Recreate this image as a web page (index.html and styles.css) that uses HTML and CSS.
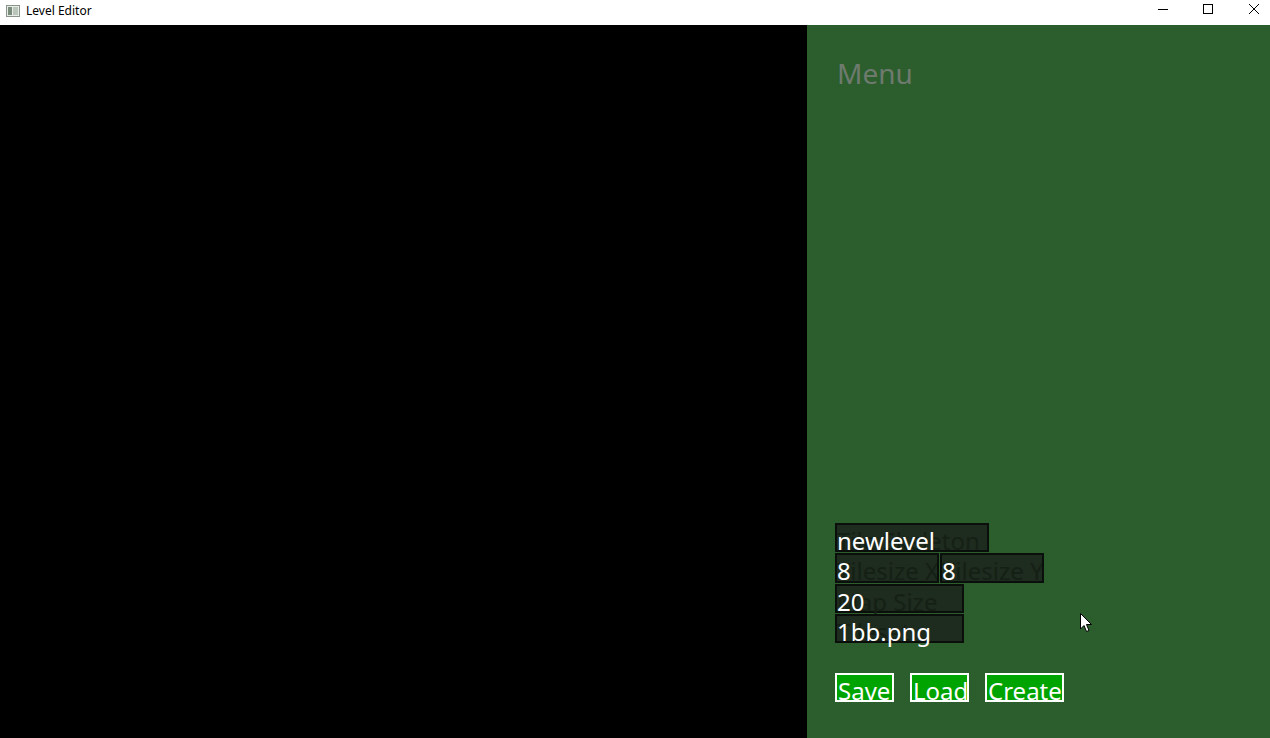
FILE: index.html
```html
<!DOCTYPE html>
<html>
<head>
<meta charset="utf-8">
<title>Level Editor</title>
<link rel="stylesheet" href="styles.css">
</head>
<body>
<div class="window">
  <header class="titlebar">
    <div class="title-left">
      <svg class="app-icon" width="14" height="12" viewBox="0 0 14 12">
        <rect x="0.5" y="0.5" width="13" height="11" fill="#e8ece8" stroke="#8a948a"/>
        <rect x="2" y="2" width="4" height="8" fill="#7a8c7a"/>
        <rect x="7" y="2" width="5" height="8" fill="#b9c6b9"/>
      </svg>
      <span class="title-text">Level Editor</span>
    </div>
    <div class="controls">
      <svg class="ctl" width="46" height="25" viewBox="0 0 46 25"><line x1="26" y1="9.5" x2="36" y2="9.5" stroke="#000" stroke-width="1"/></svg>
      <svg class="ctl" width="46" height="25" viewBox="0 0 46 25"><rect x="25.5" y="4.5" width="9" height="9" fill="none" stroke="#000" stroke-width="1"/></svg>
      <svg class="ctl" width="46" height="25" viewBox="0 0 46 25"><path d="M25 4 L35 14 M35 4 L25 14" stroke="#000" stroke-width="1"/></svg>
    </div>
  </header>
  <main class="main">
    <div class="canvas"></div>
    <aside class="panel">
      <h1 class="menu-title">Menu</h1>
      <div class="spacer"></div>
      <div class="form">
        <div class="row">
          <div class="field w154"><span class="ph">Tile Skeleton</span><span class="val">newlevel</span></div>
        </div>
        <div class="row tall">
          <div class="field w104"><span class="ph">Tilesize X</span><span class="val">8</span></div>
          <div class="field w104"><span class="ph">Tilesize Y</span><span class="val">8</span></div>
        </div>
        <div class="row">
          <div class="field w129"><span class="ph">Map Size</span><span class="val">20</span></div>
        </div>
        <div class="row">
          <div class="field w129"><span class="ph">Tileset</span><span class="val">1bb.png</span></div>
        </div>
      </div>
      <div class="buttons">
        <button class="btn w59">Save</button>
        <button class="btn w59">Load</button>
        <button class="btn w79">Create</button>
      </div>
    </aside>
  </main>
  <svg class="cursor" width="13" height="20" viewBox="0 0 13 20">
    <path d="M0.5 0.5 L0.5 16 L4 12.5 L6.5 18.5 L9 17.5 L6.5 11.5 L11.5 11.5 Z" fill="#fff" stroke="#000" stroke-width="1"/>
  </svg>
</div>
</body>
</html>
```
FILE: styles.css
```css
* { box-sizing: border-box; }
html, body { margin: 0; padding: 0; }
body {
  width: 1270px;
  height: 738px;
  overflow: hidden;
  font-family: "Noto Sans", "Open Sans", sans-serif;
  background: #000;
}
.window {
  position: relative;
  width: 1270px;
  height: 738px;
  display: flex;
  flex-direction: column;
}
.titlebar {
  height: 25px;
  background: #fff;
  display: flex;
  justify-content: space-between;
  align-items: stretch;
}
.title-left {
  display: flex;
  align-items: center;
  padding-left: 6px;
  gap: 6px;
}
.app-icon { margin-top: -4px; }
.title-text {
  font-family: "Noto Sans", "Liberation Sans", sans-serif;
  font-size: 12px;
  color: #000;
  margin-top: -4px;
}
.controls { display: flex; }
.ctl { display: block; }
.main {
  flex: 1;
  display: flex;
  min-height: 0;
}
.canvas {
  width: 807px;
  background: #000;
}
.panel {
  flex: 1;
  background: #2c5e2d;
  display: flex;
  flex-direction: column;
  padding: 0 0 36px 28px;
}
.menu-title {
  margin: 28px 0 0 2px;
  font-weight: 400;
  font-size: 28px;
  line-height: 40px;
  color: #6e7a6e;
}
.spacer { flex: 1; }
.form {
  display: flex;
  flex-direction: column;
  gap: 1px;
}
.row { display: flex; gap: 1px; }
.field {
  height: 29px;
  border: 2px solid #0b0f0b;
  background: #1e2b1f;
  display: grid;
  font-size: 24px;
  line-height: 30px;
  overflow: visible;
  white-space: nowrap;
}
.row.tall .field { height: 30px; }
.field > span {
  grid-area: 1 / 1;
  margin-top: 1px;
}
.ph { color: #152015; overflow: hidden; }
.val { color: #fff; }
.w154 { width: 154px; }
.w104 { width: 104px; }
.w129 { width: 129px; }
.buttons {
  display: flex;
  gap: 16px;
  margin-top: 30px;
}
.btn {
  height: 29px;
  border: 2px solid #fff;
  background: #00a400;
  color: #fff;
  font-family: "Noto Sans", "Open Sans", sans-serif;
  font-size: 24px;
  line-height: 19px;
  padding: 0 0 0 1px;
  text-align: left;
  white-space: nowrap;
  overflow: visible;
  display: flex;
  align-items: flex-end;
}
.w59 { width: 59px; }
.w79 { width: 79px; }
.cursor {
  position: absolute;
  left: 1080px;
  top: 613px;
}
```
